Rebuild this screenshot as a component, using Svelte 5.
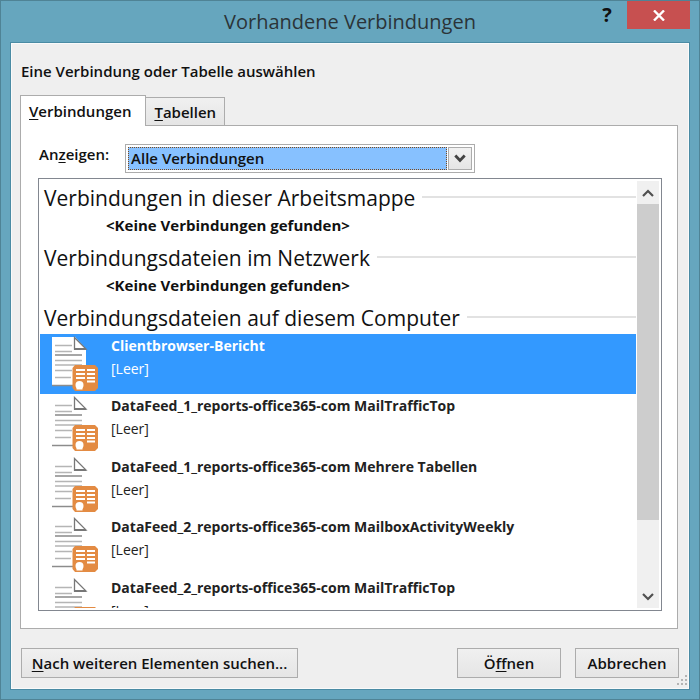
<script>
  let tab = $state('connections');
  let filter = $state('Alle Verbindungen');
  let selected = $state(0);

  const emptyGroups = ['Verbindungen in dieser Arbeitsmappe', 'Verbindungsdateien im Netzwerk'];
  const files = [
    'Clientbrowser-Bericht',
    'DataFeed_1_reports-office365-com MailTrafficTop',
    'DataFeed_1_reports-office365-com Mehrere Tabellen',
    'DataFeed_2_reports-office365-com MailboxActivityWeekly',
    'DataFeed_2_reports-office365-com MailTrafficTop'
  ];
</script>

<div class="window">
  <header>
    <h1>Vorhandene Verbindungen</h1>
    <div class="controls">
      <button class="help" aria-label="Hilfe">?</button>
      <button class="close" aria-label="Schließen">
        <svg width="12" height="11" viewBox="0 0 12 11"><path d="M1 .5 11 10.500M11 .5 1 10.500" stroke="#fff" stroke-width="2.400" /></svg>
      </button>
    </div>
  </header>

  <main>
    <p class="intro">Eine Verbindung oder Tabelle auswählen</p>

    <div class="tabs" role="tablist">
      <button role="tab" class:active={tab === 'connections'} aria-selected={tab === 'connections'} onclick={() => (tab = 'connections')}><u>V</u>erbindungen</button>
      <button role="tab" class:active={tab === 'tables'} aria-selected={tab === 'tables'} onclick={() => (tab = 'tables')}><u>T</u>abellen</button>
    </div>

    <section class="panel">
      <div class="filter">
        <label for="show">An<u>z</u>eigen:</label>
        <div class="combo">
          <select id="show" bind:value={filter}>
            <option>Alle Verbindungen</option>
          </select>
          <span class="drop">
            <svg width="12" height="9" viewBox="0 0 12 9"><path d="M1.300 1.500 6 6.500 10.700 1.500" fill="none" stroke="#444" stroke-width="2.800" /></svg>
          </span>
        </div>
      </div>

      <div class="list">
        <div class="content">
          {#each emptyGroups as name}
            <h2>{name}</h2>
            <p class="none">&lt;Keine Verbindungen gefunden&gt;</p>
          {/each}
          <h2>Verbindungsdateien auf diesem Computer</h2>
          <ul>
            {#each files as file, i}
              <li>
                <button class="file" class:selected={selected === i} onclick={() => (selected = i)}>
                  <svg class="icon" width="48" height="56" viewBox="0 0 48 56">
                    <path d="M1 1H24L35 13V50H1Z" fill="#fff" />
                    <path d="M1 49.500H22" stroke="#8c8c8c" stroke-width="1.500" />
                    <path d="M23.500 1.500V13H35Z" fill="#fff" stroke="#777" stroke-width="1.300" />
                    <path d="M23 13H35" stroke="#777" stroke-width="2" />
                    <path d="M4 9.500H21M4 15.500H21M4 24.500H31M4 29H31M4 34.500H21M4 41.500H20" stroke="#b5b5b5" stroke-width="1.300" />
                    <path d="M4 19H31" stroke="#a6a6a6" stroke-width="2" />
                    <path d="M24 29H44L47 32V52L44 55H24L21.500 52V32Z" fill="#e38b43" />
                    <path d="M25 34H34M36 34H44M25 38H34M36 38H44M25 42H34M36 42H44M36 45.500H44" stroke="#fff" stroke-width="1.800" />
                    <circle cx="28.500" cy="49" r="4" fill="#fff" />
                    <path d="M25.500 53.500V50H31.500V53.500Z" fill="#fff" />
                  </svg>
                  <span class="text"><b>{file}</b><span>[Leer]</span></span>
                </button>
              </li>
            {/each}
          </ul>
        </div>
        <div class="scroll">
          <button aria-label="Nach oben">
            <svg width="12" height="8" viewBox="0 0 12 8"><path d="M1 7 6 2 11 7" fill="none" stroke="#505050" stroke-width="2.200" /></svg>
          </button>
          <div class="track"><div class="thumb"></div></div>
          <button aria-label="Nach unten">
            <svg width="12" height="8" viewBox="0 0 12 8"><path d="M1 1 6 6 11 1" fill="none" stroke="#505050" stroke-width="2.200" /></svg>
          </button>
        </div>
      </div>
    </section>

    <footer>
      <button class="push more"><u>N</u>ach weiteren Elementen suchen...</button>
      <button class="push">Ö<u>f</u>fnen</button>
      <button class="push">Abbrechen</button>
    </footer>
    <svg class="grip" width="12" height="12" viewBox="0 0 12 12" fill="#b4b4b4"><path d="M9 0h2v2H9zM5 4h2v2H5zM9 4h2v2H9zM1 8h2v2H1zM5 8h2v2H5zM9 8h2v2H9z" /></svg>
  </main>
</div>

<style>
  :global(body) { margin: 0; }
  .window, button, select { font-family: "Open Sans", "Noto Sans", sans-serif; }
  .window {
    box-sizing: border-box;
    min-height: 100vh;
    display: flex;
    flex-direction: column;
    padding: 0 9px 9px;
    border: 1px solid #4f8395;
    background: #66a6be;
    color: #111;
    font-size: 15px;
    font-weight: 600;
  }
  h1, h2, p, ul { margin: 0; padding: 0; }
  button { border: 0; padding: 0; margin: 0; color: inherit; font-size: 15px; font-weight: 600; }
  u { text-decoration-thickness: 1px; text-underline-offset: 2px; }

  header { height: 41px; position: relative; display: flex; align-items: center; justify-content: center; }
  h1 { font-size: 20px; font-weight: 400; line-height: 30px; color: #2b3438; }
  .controls { position: absolute; top: 0; right: 0; display: flex; }
  .help { width: 40px; height: 28px; background: none; font-size: 20px; font-weight: 700; line-height: 28px; }
  .close { width: 63px; height: 28px; background: #c75050; }
  svg { display: block; }
  .close svg { margin: 0 auto; }

  main {
    flex: 1;
    position: relative;
    display: flex;
    flex-direction: column;
    padding: 17px 11px 10px 9px;
    border: 1px solid #4a8ba4;
    background: #efefef;
    box-shadow: inset 0 0 0 1px #fafafa;
  }
  .intro { line-height: 22px; padding-left: 1px; }

  .tabs { display: flex; align-items: flex-end; margin-top: 13px; }
  .tabs button {
    height: 28px;
    padding: 0 8px;
    border: 1px solid #acacac;
    border-left-width: 0;
    border-bottom: 0;
    background: linear-gradient(#f0f0f0, #e5e5e5);
  }
  .tabs .active {
    position: relative;
    height: 31px;
    margin-bottom: -1px;
    padding: 0 14px 0 8px;
    border-left-width: 1px;
    background: #fff;
  }

  .panel { border: 1px solid #acacac; background: #fff; padding: 18px 15px 17px 17px; }
  .filter { display: flex; align-items: flex-start; gap: 16px; padding-left: 1px; }
  .filter label { line-height: 20px; }
  .combo {
    flex: 0 1 350px;
    box-sizing: border-box;
    height: 29px;
    position: relative;
    border: 1px solid #acacac;
    padding: 2px;
  }
  select {
    box-sizing: border-box;
    width: calc(100% - 25px);
    height: 23px;
    padding: 0 2px 2px;
    border: 1px dotted #7a4a20;
    border-radius: 0;
    outline: 0;
    appearance: none;
    background: #87c1ff;
    color: #111;
    font-size: 15px;
    font-weight: 600;
  }
  .drop {
    position: absolute;
    top: 2px;
    right: 2px;
    width: 22px;
    height: 21px;
    display: flex;
    align-items: center;
    justify-content: center;
    border: 1px solid #acacac;
    background: linear-gradient(#f2f2f2, #e5e5e5);
    pointer-events: none;
  }

  .list { display: flex; height: 431px; margin-top: 5px; border: 1px solid #828790; }
  .content { flex: 1; min-width: 0; overflow: hidden; padding: 4px 0 0 1px; margin-bottom: 2px; }
  h2 {
    display: flex;
    align-items: center;
    gap: 7px;
    padding-left: 4px;
    font-size: 21px;
    font-weight: 400;
    line-height: 30px;
  }
  h2::after { content: ""; flex: 1; border-top: 2px solid #e2e2e2; margin-top: -2px; }
  .none { padding-left: 66px; font-size: 15px; font-weight: 700; line-height: 24px; padding-bottom: 6px; }
  ul { list-style: none; padding-top: 1px; }
  .file { display: flex; width: 100%; height: 60px; background: none; text-align: left; color: #222; }
  li:nth-child(even) .file { height: 61px; }
  .file.selected { background: #3399ff; color: #fff; }
  .icon { margin: 2px 12px 0 11px; flex: none; }
  .text { display: flex; flex-direction: column; font-size: 14px; font-weight: 400; line-height: 24px; }
  .text span { line-height: 22px; }

  .scroll { width: 22px; display: flex; flex-direction: column; margin: 2px 2px 2px 1px; background: #f0f0f0; }
  .scroll button { height: 23px; display: flex; align-items: center; justify-content: center; background: #f0f0f0; }
  .track { flex: 1; }
  .thumb { height: 83%; background: #cdcdcd; }

  footer { display: flex; gap: 14px; margin: 19px -1px 0 0; padding: 0 0 0 1px; }
  .push {
    box-sizing: border-box;
    width: 104px;
    height: 30px;
    border: 1px solid #acacac;
    background: linear-gradient(#f0f0f0, #e5e5e5);
  }
  .more { width: 277px; margin-right: auto; }
  .grip { position: absolute; right: 1px; bottom: 2px; }
</style>
